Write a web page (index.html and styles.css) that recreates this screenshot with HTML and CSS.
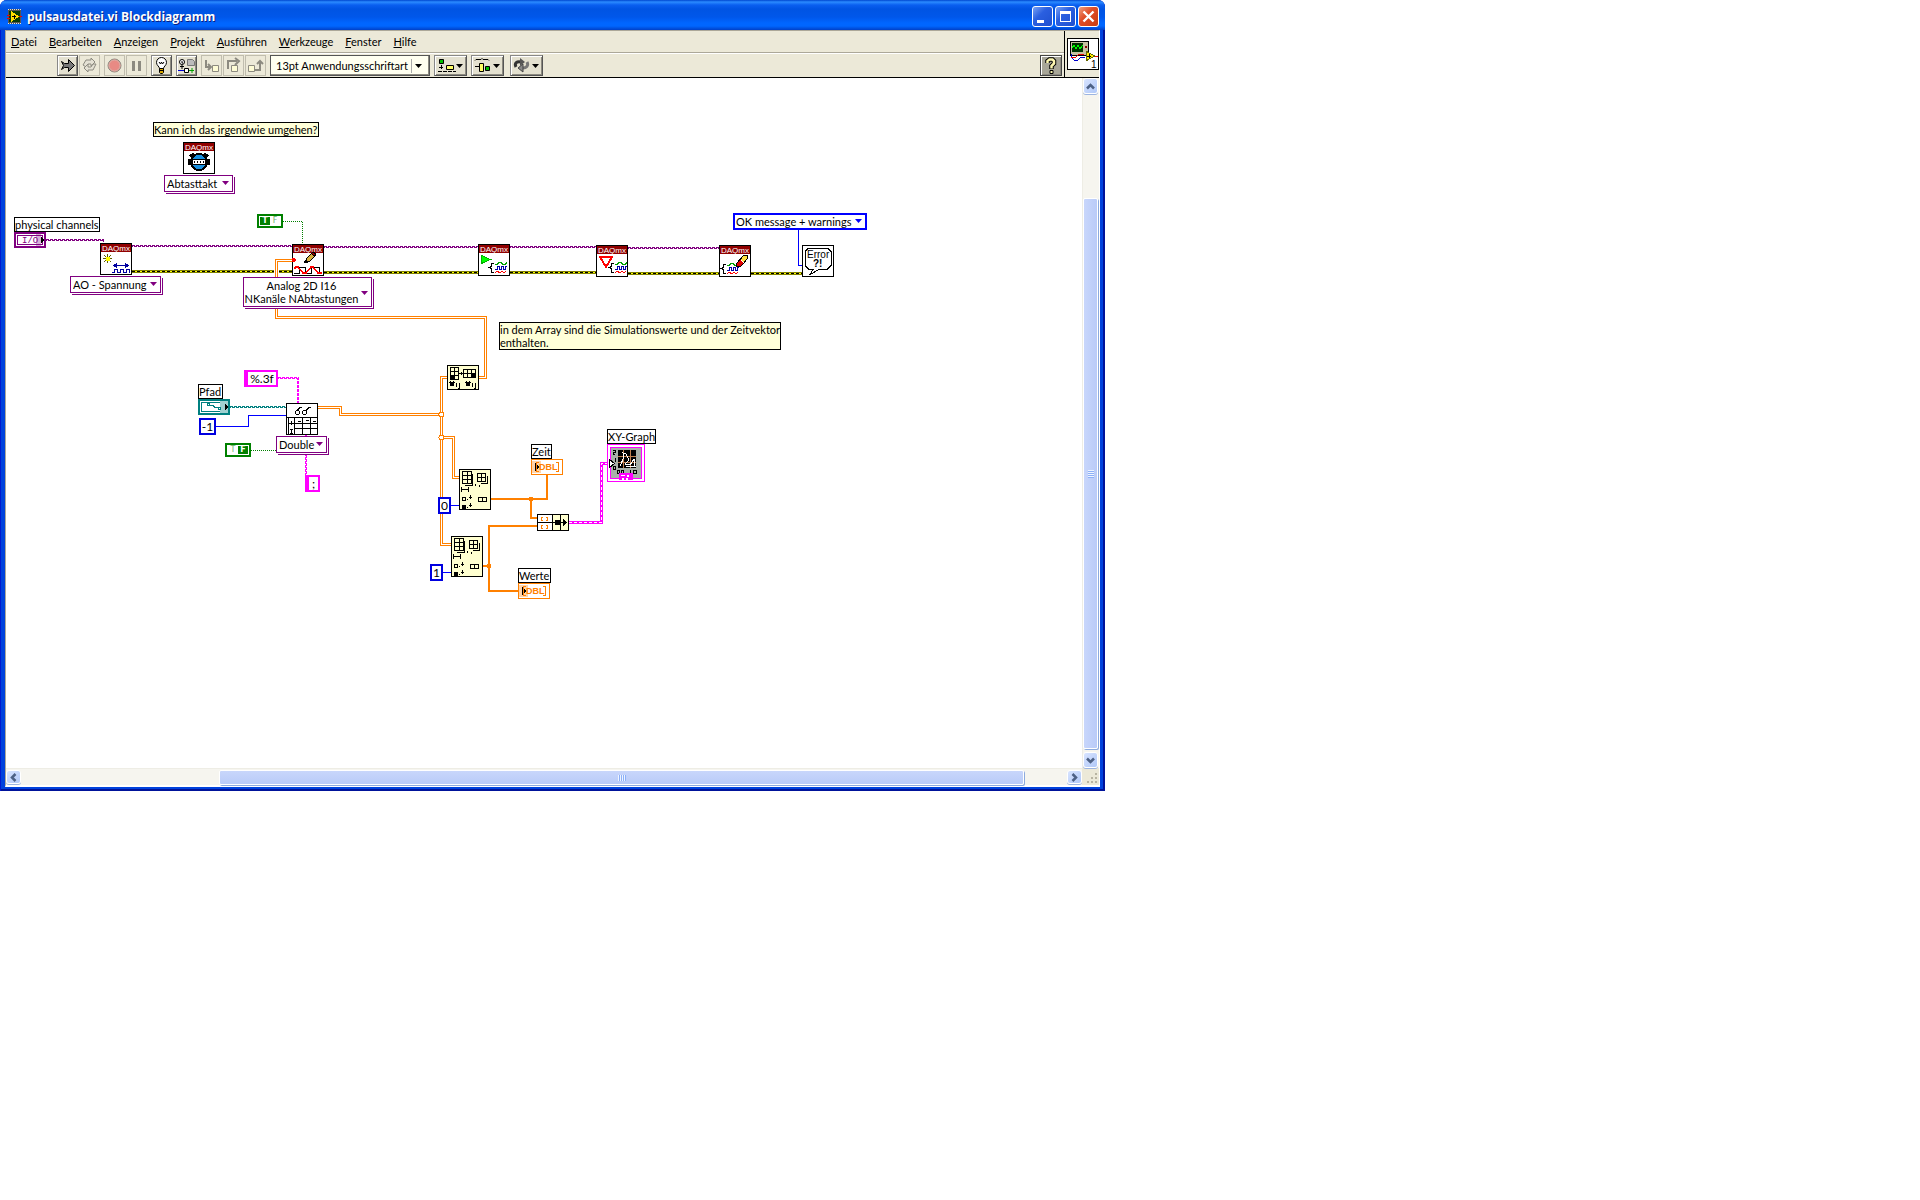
FILE: index.html
```html
<!DOCTYPE html>
<html lang="de">
<head>
  <meta charset="UTF-8" />
  <meta name="viewport" content="width=device-width, initial-scale=1.0"/>
  <title>pulsausdatei.vi Blockdiagramm</title>
  <link rel="stylesheet" href="styles.css">
</head>
<body>
<main class="window">
  <header class="titlebar">
    <svg class="title-icon" width="16" height="16" viewBox="0 0 16 16" shape-rendering="crispEdges">
      <path fill="#555" d="M1 0h13v15H1z"/><path stroke="#ddd" stroke-dasharray="1 1" d="M1 .5h13M1 14.5h13"/>
      <path fill="#063b06" d="M2 2h11v11H2z"/><path stroke="#e00" d="M0 6.500h3M0 9.500h3M11 7.500h4"/>
      <path fill="#fd0" d="M4 2l8 5.500-8 5.500z"/><path stroke="#000" d="M5 7.500h4M7 5.500v4"/>
    </svg>
    <h1>pulsausdatei.vi Blockdiagramm</h1>
    <button class="win-btn" aria-label="Minimieren"><svg width="19" height="19"><path fill="#fff" d="M4 13h7v3H4z"/></svg></button>
    <button class="win-btn" aria-label="Maximieren"><svg width="19" height="19"><path fill="#fff" fill-rule="evenodd" d="M4 4h11v11H4zM5 7v7h9V7z"/></svg></button>
    <button class="win-btn close" aria-label="Schließen"><svg width="19" height="19"><path stroke="#fff" stroke-width="2.400" d="M4.500 4.500l10 10M14.500 4.500l-10 10"/></svg></button>
  </header>

  <div class="frame">
    <div class="head">
      <div class="bars">
        <nav class="menu">
          <a href="#"><u>D</u>atei</a>
          <a href="#"><u>B</u>earbeiten</a>
          <a href="#"><u>A</u>nzeigen</a>
          <a href="#"><u>P</u>rojekt</a>
          <a href="#"><u>A</u>usführen</a>
          <a href="#"><u>W</u>erkzeuge</a>
          <a href="#"><u>F</u>enster</a>
          <a href="#"><u>H</u>ilfe</a>
        </nav>
        <div class="toolbar">
          <div class="group">
            <button class="tool" aria-label="Ausführen"><svg width="19" height="19"><path fill="#777" stroke="#000" d="M3.500 5.500l3 2h4v-4l6 6-6 6v-4h-4l-3 2 2-4z"/></svg></button>
            <button class="tool off" aria-label="Wiederholt ausführen"><svg width="19" height="19" fill="#e4e1d4" stroke="#8c8a80"><path d="M3 9l3-5h5V2l4 4-4 4V8H8L6 11z"/><path d="M16 8l-3 6H8v2l-4-4 4-4v3h3l2-3z"/></svg></button>
          </div>
          <div class="group">
            <button class="tool off" aria-label="Abbrechen"><svg width="19" height="19"><circle cx="9.500" cy="9.500" r="6.500" fill="#e88a84" stroke="#8c8a80"/><circle cx="9.500" cy="9.500" r="5.500" fill="none" stroke="#d8b0a8"/></svg></button>
            <button class="tool off" aria-label="Pause"><svg width="19" height="19"><path fill="#8c8a80" d="M5 5h3v10H5zM11 5h3v10h-3z"/></svg></button>
          </div>
          <button class="tool" aria-label="Highlight-Funktion"><svg width="19" height="19"><path fill="#fff" stroke="#000" d="M7.500 12.500c0-2-3-3-3-6a5 5 0 0 1 10 0c0 3-3 4-3 6z"/><path fill="none" stroke="#000" d="M7 6l1.500 2L9.500 6l1 2L12 6"/><path fill="#dca800" stroke="#000" d="M7.500 12.500h4v4l-1 1h-2l-1-1z"/><path stroke="#000" d="M7 14.500h5"/></svg></button>
          <button class="tool" aria-label="Verbindungswerte speichern"><svg width="19" height="19"><circle cx="5" cy="6" r="2.500" fill="#fff" stroke="#000"/><path fill="none" stroke="#000" d="M5 5v2h1M3 10.500h4M5 9v4"/><path fill="#bbb" stroke="#777" d="M10.500 3.500h5l2 2v4h-7z"/><path stroke="#0000d0" d="M1 14.500h6"/><path stroke="#00a000" d="M11 14.500h6M15 12v5"/><path fill="#fff" stroke="#000" d="M7.500 12.500h4v4h-4z"/></svg></button>
          <div class="group">
            <button class="tool off" aria-label="Hineinspringen"><svg width="19" height="19"><path fill="none" stroke="#8c8a80" stroke-width="2" d="M4 4v7h4M6 8l3 3-3 3"/><path fill="#fdfbd5" stroke="#8c8a80" d="M10.500 9.500h6v6h-6z"/></svg></button>
            <button class="tool off" aria-label="Überspringen"><svg width="19" height="19"><path fill="none" stroke="#8c8a80" stroke-width="2" d="M4 13V5h9M11 2l4 3-4 4"/><path fill="#fdfbd5" stroke="#8c8a80" d="M7.500 9.500h6v6h-6z"/></svg></button>
            <button class="tool off" aria-label="Herausspringen"><svg width="19" height="19"><path fill="none" stroke="#8c8a80" stroke-width="2" d="M9 14h5V5M11 8l3-3 3 3"/><path fill="#fdfbd5" stroke="#8c8a80" d="M2.500 9.500h6v6h-6z"/></svg></button>
          </div>
          <div class="font-box">
            <select class="font-select" aria-label="Schriftart"><option>13pt Anwendungsschriftart</option></select>
          </div>
          <button class="tool wide" aria-label="Objekte ausrichten"><svg width="31" height="19"><path fill="#00c000" stroke="#000" d="M4.500 3.500h4v4h-4z"/><path stroke="#000" d="M6.500 9v5M4 11.500h5M3 15.500h18" stroke-dasharray="4 1"/><path fill="#ff6" stroke="#000" d="M11.500 9.500h7v4h-7z"/><path d="M21 8h7l-3.500 4z"/></svg></button>
          <button class="tool wide" aria-label="Objekte einreihen"><svg width="31" height="19"><path fill="none" stroke="#000" d="M3 4.500l1-1h5l1-1 1 1h5l1 1M3 10.500h4"/><path fill="#ff6" stroke="#000" d="M7.500 7.500h4v8h-4z"/><path fill="#00c000" stroke="#000" d="M13.500 10.500h4v4h-4z"/><path d="M21 8h7l-3.500 4z"/></svg></button>
          <button class="tool wide reorder" aria-label="Neu ordnen"><svg width="31" height="19"><path fill="none" stroke="#333" stroke-width="3" d="M5 11c-2-4 1-6 5-5"/><path fill="#555" d="M9 2l5 4-5 4z"/><path fill="none" stroke="#777" stroke-width="3" d="M16 6c2 4-1 6-4 6"/><path fill="#888" stroke="#444" d="M12 8v8l-5-4z"/><path d="M21 8h7l-3.500 4z"/></svg></button>
          <button class="tool help" aria-label="Kontexthilfe"><svg width="20" height="19"><path fill="none" stroke="#000" stroke-width="4.500" d="M6.500 7V5l2-1.500h3L13 5v2.500L10.500 10v3"/><path fill="none" stroke="#fdf7b0" stroke-width="2.500" d="M6.500 7V5l2-1.500h3L13 5v2.500L10.500 10v2.500"/><path fill="#fdf7b0" stroke="#000" d="M9 14.500h3v3H9z"/></svg></button>
        </div>
      </div>
      <div class="vi-icon">
        <svg width="32" height="32" shape-rendering="crispEdges">
          <path fill="#fff" stroke="#000" stroke-width="2" d="M0 0h32v32H0z"/>
          <path fill="#c8c0a0" stroke="#000" d="M3.500 3.500h18v14h-18z"/><path fill="#030" d="M5 5h11v9H5z"/>
          <path fill="none" stroke="#0f0" d="M5 10l2-3 2 4 2-4 2 4 3-4"/><path fill="#800" d="M18 8h2v2h-2z"/>
          <path fill="none" stroke="#00c" d="M4 16v3l3 3h4l3-3h4"/><path fill="none" stroke="#e00" d="M4 19h5l3-3h5M26 18h5"/>
          <path fill="#fe0" stroke="#660" d="M19.500 13.500l8 4.500-8 4.500z"/><path stroke="#000" d="M20 18.500h4M22 16v4"/>
          <text x="24" y="30" class="tiny">1</text>
        </svg>
      </div>
    </div>

    <div class="work">
      <section class="canvas">
        <svg class="wires" width="100%" height="100%">
          <defs>
            <g id="daqmx">
              <path fill="#fff" d="M0 0h32v32H0z"/><path fill="#900000" d="M0 0h32v9H0z"/>
              <path fill="none" stroke="#000" d="M.5.5h31v31H.5z"/>
              <text x="2" y="8" class="daq">DAQmx</text>
            </g>
            <g id="waves" fill="none">
              <path stroke="#000" d="M5.500 11.500h-2v3l-2 1 2 1v4h2"/>
              <path stroke="#00a000" d="M7 12.500h2l2-2h2l2 2h2l2-2"/>
              <path stroke="#00a" d="M7 17.500h2v-3h2v3h2v-3h2v3h2v-3h2"/>
              <path stroke="#f00" d="M7 21l2-2 3 2 2-2 2 2 2-2"/>
            </g>
            <g id="index">
              <path fill="#ffffd0" stroke="#000" d="M.5.500h31v40H.500z"/>
              <path fill="none" stroke="#000" d="M3.500 2.500h9v12h-9zM3.500 6.500h9M3.500 10.500h9M8 2.500v12M13.500 4.500v12h-8M18.500 4.500h8v8h-8zM22.500 4.500v8M18.500 8.500h8M28.500 7v7h-7M2.500 18v5M9.500 18v5M3 20.500h6M3.500 28.500h3v3h-3zM8 30.500h1M10 28.500h3M11.500 26v4M10 36.500h3M11.500 34v4M8 38.500h1M19.500 28.500h8v4h-8zM23.500 28.500v4M16.500 15v2M20.500 16v2"/>
              <path d="M3 36h4v4H3z"/>
            </g>
            <g id="dbl">
              <path fill="#fff" stroke="#ff8000" d="M.5.500h31v15H.500z"/>
              <path fill="#ffd4aa" d="M1 2h9v12H1z"/><path d="M4 4l4 4-4 4z"/>
              <path fill="none" stroke="#ff8000" d="M8 3.500H5.500v9H8M25 3.500h2.500v9H25"/>
              <text x="8" y="11" class="dbl">DBL</text>
            </g>
            <path id="error-wire" fill="none" d="M132 271.500h142M279 271.500h13M324 272.500h154M510 272.500h86M628 273.500h91M751 273.500h51"/>
            <path id="array-wire" fill="none" d="M292 260.500h-15.500v57h209v60h-6.500M318 407.500h22.500v7h101M447 377.500h-5.500v167h9.500M441.500 437.500h12v40h5.500"/>
          </defs>

          <g transform="translate(-6 -78)" shape-rendering="crispEdges" fill="none">
            <!-- error cluster -->
            <use href="#error-wire" class="err-edge"/>
            <use href="#error-wire" class="err-core"/>
            <use href="#error-wire" class="err-dash"/>
            <!-- task -->
            <g class="task">
              <path d="M46 239.500h57v4M132 245.500h160M324 246.500h154M510 246.500h86M628 247.500h91"/>
              <path class="alt" d="M46 240.500h57M132 246.500h160M324 247.500h154M510 247.500h86M628 248.500h91"/>
            </g>
            <!-- booleans -->
            <path class="bool" d="M283 221.500h19.500v23M251 450.500h25"/>
            <!-- path, string -->
            <path class="path-wire" d="M230 406.500h56"/><path class="path-wire alt" d="M230 407.500h56"/>
            <path class="string" d="M278 377.500h20.500v26M306.500 435v40"/><path class="string alt" d="M278 378.500h19.500v25M305.500 435v40"/>
            <!-- integers -->
            <path stroke="#0000ff" d="M798.500 230v35.500h3.500M216 426.500h32.500v-11H286M451 505.500h8M443 572.500h8"/>
            <!-- 2D arrays -->
            <use href="#array-wire" class="array-edge"/>
            <use href="#array-wire" class="array-core"/>
            <circle cx="441.500" cy="414.500" r="2.500" fill="#fff" stroke="#ff8000"/><circle cx="441.500" cy="437.500" r="2.500" fill="#fff" stroke="#ff8000"/>
            <!-- 1D arrays -->
            <path stroke="#ff8000" stroke-width="2" d="M491 499h56v-24M531 499v19h6M483 566h6v-40h48M489 566v25h29"/>
            <circle cx="531" cy="499" r="2.500" fill="#ff8000"/><circle cx="489" cy="566" r="2.500" fill="#ff8000"/>
            <!-- cluster -->
            <path stroke="#ff00ff" stroke-width="3" d="M569 522.500h32.500v-59h5.500"/><path stroke="#fff" stroke-dasharray="3 2" d="M569 522.500h32.500v-59h5.500"/>
          </g>

          <g transform="translate(-6 -78)" shape-rendering="crispEdges">
            <g transform="translate(183 142)">
              <use href="#daqmx"/>
              <circle cx="16" cy="20" r="8" fill="#1890e0" stroke="#000" stroke-width="2"/>
              <path d="M6 13l4-2 3 2-4 4zM26 13l-4-2-3 2 4 4zM5 17h3v6H5zM24 17h3v6h-3z"/>
              <path fill="#fff" stroke="#000" d="M9.500 17.500h13v5h-13z"/><path stroke="#000" d="M11.500 19v2M14.500 19v2M17.500 19v2M20.500 19v2"/>
            </g>
            <g transform="translate(100 243)">
              <use href="#daqmx"/>
              <path stroke="#606000" d="M7.500 11v9M3 15.500h9M4 12l7 7M11 12l-7 7"/><path fill="#ff0" d="M6 14h4v4H6z"/>
              <path stroke="#0000a0" d="M14 22.500h14"/><path fill="#0000a0" d="M13 22.500l4-3v6zM29 22.500l-4-3v6z"/>
              <path fill="none" stroke="#0000a0" d="M12 29.500h2v-3h3v3h3v-3h3v3h3v-3h3v3h1"/>
            </g>
            <g transform="translate(292 244)">
              <use href="#daqmx"/>
              <path fill="#d8b040" stroke="#000" d="M13.500 18.500l1-4 5-5 3 3-5 5z"/><path fill="#900" stroke="#000" d="M19.500 9.500l1-1h2l1 2-1 2z"/><path d="M12 19l3-1-2-2z"/>
              <path fill="none" stroke="#000" d="M2 29.500h5v-6h6v6h6v-6h8v6h3"/>
              <path fill="none" stroke="#f00" stroke-width="1.500" d="M2 25l2-2h2l5 6h3l5-6h2l5 6h4"/>
              <path fill="#f00" d="M0 14h2l2 2-2 2H0z"/>
            </g>
            <g transform="translate(478 244)">
              <use href="#daqmx"/><path fill="#0f0" stroke="#00b000" d="M3.500 11.500v8l9-4z"/>
              <use href="#waves" x="10" y="8"/>
            </g>
            <g transform="translate(596 245)">
              <use href="#daqmx"/><path fill="#fff" stroke="#f00" stroke-width="2" d="M4 12h12l-6 10z"/>
              <use href="#waves" x="12" y="7"/>
            </g>
            <g transform="translate(719 245)">
              <use href="#daqmx"/><use href="#waves" x="1" y="8"/>
              <path fill="#ffe040" stroke="#000" d="M17.500 18.500l7-8h4v3l-7 8h-4z"/><path fill="#e00000" d="M18 18l3-3 3 3-3 3h-3z"/><path stroke="#fff" d="M22 15l3 3"/>
            </g>
            <g transform="translate(802 245)">
              <path fill="#fff" stroke="#000" d="M.5.500h31v31H.500z"/>
              <path fill="none" stroke="#000" d="M6 3.500h20l3 3v14l-4 4H17l-9 5 3-5H7l-4-4v-14z"/>
              <text x="5" y="13" class="err">Error</text><text x="11" y="22" class="err bold">?!</text>
            </g>
            <g transform="translate(286 403)">
              <path fill="#fff" stroke="#000" d="M.5.500h31v31H.500z"/>
              <path fill="none" stroke="#000" d="M11 7.500l3-3h2M20 7.500l3-3h2M.5 14.500h31M2.500 15v17M8.500 15v17M16.500 15v17M24.500 15v17M3 20.500h28M8 25.500h23M5.500 18v4M4 26.500h3M4 30.500h3M5.500 27v4M12 18.500h3M20 17.500h3M27 18.500h3"/>
              <circle cx="11.500" cy="9.500" r="2" fill="none" stroke="#000"/><circle cx="18.500" cy="9.500" r="2" fill="none" stroke="#000"/>
            </g>
            <g transform="translate(447 365)">
              <path fill="#ffffd0" stroke="#000" d="M.5.500h31v24H.500z"/>
              <path fill="none" stroke="#000" d="M3.500 2.500h8v12h-8zM3.500 6.500h8M3.500 10.500h8M7.500 2.500v12M12 8.500h4M14.500 7v3M16.500 4.500h12v8h-12zM16.500 8.500h12M20.500 4.500v8M24.500 4.500v8M9.500 18v4M12.500 18v5h-2M25.500 18v4M28.500 18v5h-2"/>
              <path stroke="#000" stroke-width="2" d="M3 17l4 4M7 17l-4 4M19 17l4 4M23 17l-4 4"/>
              <path d="M3 11h4v4H3zM25 9h4v4h-4z"/>
            </g>
            <use href="#index" x="459" y="469"/>
            <use href="#index" x="451" y="536"/>
            <g transform="translate(537 514)">
              <path fill="#ffffd0" stroke="#000" d="M.5.500h31v16H.500z"/><path fill="#fff" d="M1 1h14v15H1z"/>
              <path fill="none" stroke="#000" d="M15.500 0v17M23.500 0v17M0 8.500h16M16 8.500h13"/>
              <path d="M18 6h5v5h-5zM26 5l4 3.500-4 3.500z"/><path fill="none" stroke="#ff8000" d="M6 3.500H4.500v3H6M9 3.500h1.500v3H9M6 11.500H4.500v3H6M9 11.500h1.500v3H9"/>
            </g>
            <use href="#dbl" x="531" y="459"/>
            <use href="#dbl" x="518" y="583"/>
            <g transform="translate(14 232)">
              <path fill="#fff" stroke="#800080" stroke-width="2" d="M1 1h30v14H1z"/><path fill="#d8b0d8" d="M22 2h5v12h-5z"/><path fill="none" stroke="#800080" d="M3.500 3.500h25v9h-25z"/>
              <text x="8" y="11" class="io">I/O</text><path d="M27 5l3 3-3 3z"/>
            </g>
            <g transform="translate(198 399)">
              <path fill="#fff" stroke="#008080" stroke-width="2" d="M1 1h30v14H1z"/><path fill="none" stroke="#008080" d="M3.500 3.500h25v9h-25z"/>
              <path fill="#a0d0d0" d="M22 2h8v12h-8z"/><path fill="none" stroke="#008080" d="M9.500 4.500h2v2h-2zM12 6.500h3l2 2h3M20.500 8.500h2v2h-2z"/><path d="M27 5l3 3-3 3z"/>
            </g>
            <g transform="translate(607 444)">
              <path fill="#fff" stroke="#ff00ff" d="M.5.500h37v37H.500z"/><path fill="#a8b0a8" stroke="#ff00ff" d="M3.500 3.500h31v31h-31z"/>
              <path d="M11 6h18v18H11z"/><path fill="none" stroke="#c08050" d="M16.500 6v18M23.500 6v18M11 12.500h18M11 18.500h18"/>
              <path fill="none" stroke="#fff" d="M13 22l4-9-1-4 3 1 3 6-4 4 5 1 4-6 1 7h-9"/>
              <path fill="none" stroke="#000" d="M6 6.500h2v2H6v2h2M8.500 14v4M6.500 22.500h2v3h-2zM10.500 26.500h2v3h-2zM14.500 26.500h2v3h-2zM23.500 26v4M26.500 26.500h3v3h-3z"/>
              <path fill="#fff" stroke="#000" d="M2.500 15.500l5 4-5 4z"/><path fill="#ff00ff" d="M12 29h14v7H12z"/><path fill="#fff" d="M14 31h4v1h-4zM20 31h2v2h-2zM15 34h2v2h-2zM19 34h2v2h-2z"/>
            </g>
          </g>
        </svg>

        <p class="note n-question">Kann ich das irgendwie umgehen?</p>
        <p class="note n-array">in dem Array sind die Simulationswerte und der Zeitvektor<br>enthalten.</p>

        <span class="label l-channels">physical channels</span>
        <span class="label l-pfad">Pfad</span>
        <span class="label l-zeit">Zeit</span>
        <span class="label l-werte">Werte</span>
        <span class="label l-graph">XY-Graph</span>

        <div class="poly p-takt"><select aria-label="DAQmx Timing"><option>Abtasttakt</option></select></div>
        <div class="poly p-kanal"><select aria-label="DAQmx Kanal"><option>AO - Spannung</option></select></div>
        <div class="poly p-double"><select aria-label="Datentyp"><option>Double</option></select></div>
        <button class="poly p-write" aria-haspopup="listbox">Analog 2D I16<br>NKanäle NAbtastungen</button>
        <div class="ring"><select aria-label="Fehlerdialog"><option>OK message + warnings</option></select></div>

        <button class="bool-const b-true" aria-label="TRUE"><b>T</b><i>F</i></button>
        <button class="bool-const b-false" aria-label="FALSE"><i>T</i><b>F</b></button>

        <input class="const str c-format" aria-label="Format" value="%.3f">
        <input class="const str c-sep" aria-label="Trennzeichen" value=";">
        <input class="const c-rows" aria-label="Anzahl Zeilen" value="-1">
        <input class="const c-zero" aria-label="Index Zeit" value="0">
        <input class="const c-one" aria-label="Index Werte" value="1">
      </section>

      <div class="scroll vertical">
        <button aria-label="Nach oben"><svg width="9" height="9"><path d="M1 6.500l3.500-3.500L8 6.500"/></svg></button>
        <div class="thumb"></div>
        <button aria-label="Nach unten"><svg width="9" height="9"><path d="M1 2.500L4.500 6 8 2.500"/></svg></button>
      </div>
      <div class="scroll horizontal">
        <button aria-label="Nach links"><svg width="9" height="9"><path d="M6.500 1L3 4.500 6.500 8"/></svg></button>
        <div class="thumb"></div>
        <button aria-label="Nach rechts"><svg width="9" height="9"><path d="M2.500 1L6 4.500 2.500 8"/></svg></button>
      </div>
      <div class="grip"><svg width="12" height="12"><path fill="#b8b4a2" d="M9 1h2v2H9zM5 5h2v2H5zM9 5h2v2H9zM1 9h2v2H1zM5 9h2v2H5zM9 9h2v2H9z"/></svg></div>
    </div>
  </div>
</main>
</body>
</html>
```
FILE: styles.css
```css
* {
  box-sizing: border-box;
}
body {
  margin: 0;
  background: #fff;
  color: #000;
  font: 11px/13px "Lato", sans-serif;
  display: grid;
  grid-template-columns: 221fr 163fr;
}
button, input, select {
  font: inherit;
  color: inherit;
  margin: 0;
  padding: 0;
  border: none;
  border-radius: 0;
  background: none;
}
select {
  appearance: none;
  outline: none;
}
svg {
  display: block;
}

/* window frame */
.window {
  background: #0042dd;
  border-radius: 7px 7px 0 0;
  box-shadow: inset 1px 0 #0019cf, inset -2px -2px #00139a;
  overflow: hidden;
}
.titlebar {
  display: flex;
  align-items: center;
  gap: 2px;
  height: 30px;
  padding: 3px 6px 0 7px;
  background: linear-gradient(#0046d0 0, #2b8bff 2px, #0a5ff0 5px, #0054e3 9px, #0057ea 17px, #0066ff 23px, #0066ff 26px, #0040c8 30px);
}
.titlebar h1 {
  flex: 1;
  margin: 0 0 0 2px;
  color: #fff;
  font: bold 12px/18px "Open Sans", sans-serif;
  text-shadow: 1px 1px #0a1f80;
}
.win-btn {
  width: 21px;
  height: 21px;
  border: 1px solid #fff;
  border-radius: 3px;
  background: linear-gradient(135deg, #7aa2f4, #2a5fe0 40%, #1f50d0);
}
.win-btn.close {
  background: linear-gradient(135deg, #f0a080, #e04e28 40%, #c83c10);
}
.frame {
  margin: 0 5px 4px;
  border: 1px solid #fff;
  border-top-color: #aca899;
  border-left-color: #aca899;
  border-bottom-width: 2px;
  background: #ece9d8;
}

/* menu and toolbar */
.head {
  display: flex;
  border-bottom: 1px solid #000;
}
.bars {
  flex: 1;
}
.menu {
  display: flex;
  gap: 12px;
  height: 22px;
  padding: 4px 5px;
  border-bottom: 1px solid #aca899;
}
.menu a {
  color: #000;
  text-decoration: none;
}
.toolbar {
  display: flex;
  height: 24px;
  padding: 1px 2px 0 51px;
  border-top: 1px solid #fff;
  gap: 4px;
}
.group {
  display: flex;
  gap: 1px;
}
.tool {
  width: 21px;
  height: 21px;
  border: 1px solid #555;
  border-top-color: #888;
  border-left-color: #888;
  background: #e4e1d0;
  box-shadow: inset 1px 1px #fff, inset -1px -1px #8c8a80;
}
.tool.off {
  border-color: #c0bdae;
  background: #ece9d8;
  box-shadow: none;
}
.tool.wide {
  width: 33px;
}
.tool.reorder {
  margin-left: 2px;
}
.tool.help {
  width: 22px;
  margin-left: auto;
  background: #a8a698;
  border: 1px solid #444;
}
.font-box {
  position: relative;
  width: 160px;
  height: 21px;
  border: 1px solid #555;
  background: #fffff0;
  box-shadow: inset -1px -1px #8c8a80;
}
.font-select {
  width: 100%;
  height: 18px;
  padding-left: 5px;
}
.font-box::after {
  content: "";
  position: absolute;
  right: 7px;
  top: 8px;
  width: 7px;
  height: 4px;
  background: #000;
  clip-path: polygon(0 0, 100% 0, 50% 100%);
}
.font-box::before {
  content: "";
  position: absolute;
  right: 17px;
  top: 3px;
  height: 14px;
  border-left: 1px solid #aaa;
}
.vi-icon {
  width: 35px;
  padding: 7px 0 0 2px;
  border-left: 1px solid #000;
}
.tiny {
  font: 10px "Liberation Sans", sans-serif;
}

/* diagram */
.work {
  display: grid;
  grid-template-columns: 1fr 17px;
}
.canvas {
  position: relative;
  min-height: 690px;
  background: #fff;
  overflow: hidden;
}
.wires {
  position: absolute;
  inset: 0;
}
.err-edge {
  stroke: #808000;
  stroke-width: 3;
}
.err-core {
  stroke: #ff0;
}
.err-dash {
  stroke: #000;
  stroke-dasharray: 3 2;
}
.task path {
  stroke: #800080;
  stroke-dasharray: 3 1;
}
.task .alt, .path-wire.alt, .string.alt {
  stroke-dashoffset: 2;
}
.bool {
  stroke: #008000;
  stroke-dasharray: 1 1;
}
.path-wire {
  stroke: #008080;
  stroke-dasharray: 3 1;
}
.string {
  stroke: #ff00ff;
  stroke-dasharray: 3 1;
}
.array-edge {
  stroke: #ff8000;
  stroke-width: 3;
}
.array-core {
  stroke: #fff;
}
.daq {
  font: 8px "Liberation Sans", sans-serif;
  fill: #fff;
}
.dbl {
  font: bold 9px "Liberation Sans", sans-serif;
  fill: #ff8000;
}
.io {
  font: 9px "Liberation Mono", monospace;
  fill: #800080;
}
.err {
  font: 10px "Liberation Sans", sans-serif;
}
.err.bold {
  font-weight: bold;
}

.note, .label, .poly, .ring, .const, .bool-const {
  position: absolute;
  margin: 0;
}
.note, .label {
  border: 1px solid #000;
  background: #fff;
  white-space: nowrap;
}
.note {
  background: #ffffd8;
}
.n-question { left: 147px; top: 44px; min-width: 166px; }
.n-array { left: 493px; top: 244px; min-width: 281px; }
.l-channels { left: 8px; top: 139px; min-width: 86px; }
.l-pfad { left: 192px; top: 306px; min-width: 25px; }
.l-zeit { left: 525px; top: 366px; min-width: 21px; }
.l-werte { left: 512px; top: 490px; min-width: 33px; }
.l-graph { left: 601px; top: 351px; min-width: 48px; }

.poly {
  height: 17px;
  border: 1px solid #800080;
  background: #fff;
  box-shadow: 1px 1px #fff, 2px 2px #800080;
}
.poly select, .ring select {
  width: 100%;
  height: 15px;
  padding-left: 2px;
}
.poly::after, .ring::after {
  content: "";
  position: absolute;
  right: 3px;
  top: 5px;
  width: 7px;
  height: 4px;
  background: #800080;
  clip-path: polygon(0 0, 100% 0, 50% 100%);
}
.p-takt { left: 158px; top: 97px; width: 69px; }
.p-kanal { left: 64px; top: 198px; width: 91px; }
.p-double { left: 270px; top: 358px; width: 51px; }
.p-write { left: 237px; top: 199px; width: 129px; height: 30px; padding-right: 12px; white-space: nowrap; }
.p-write::after { top: 13px; }
.ring {
  left: 727px;
  top: 135px;
  width: 134px;
  height: 17px;
  border: 2px solid #0000ff;
  background: #fff;
}
.ring select {
  height: 13px;
  padding-left: 1px;
}
.ring::after {
  background: #0000ff;
  top: 4px;
}

.const {
  height: 17px;
  border: 2px solid #0000e0;
  background: #fff;
  font-size: 12px;
  text-align: center;
}
.const.str {
  border-color: #ff00ff;
  border-left-width: 4px;
}
.c-format { left: 238px; top: 292px; width: 34px; }
.c-sep { left: 299px; top: 397px; width: 15px; }
.c-rows { left: 193px; top: 340px; width: 17px; }
.c-zero { left: 432px; top: 419px; width: 13px; }
.c-one { left: 424px; top: 486px; width: 13px; }

.bool-const {
  display: flex;
  width: 26px;
  height: 14px;
  border: 2px solid #008000;
  background: #fff;
  padding: 1px;
  font: 8px/8px "DejaVu Sans", sans-serif;
  color: #008000;
}
.bool-const b, .bool-const i {
  flex: 1;
  font-style: normal;
}
.bool-const b {
  background: #008000;
  color: #fff;
}
.bool-const i {
  opacity: 0.6;
}
.b-true { left: 251px; top: 136px; }
.b-false { left: 219px; top: 365px; }

/* scrollbars */
.scroll {
  display: grid;
  background: #f6f5ef;
}
.scroll button {
  display: grid;
  place-items: center;
  width: 15px;
  height: 16px;
  border: 1px solid #fff;
  border-radius: 3px;
  background: linear-gradient(135deg, #d8e4ff, #b0c8f8);
  box-shadow: 0 1px #9cb4e0;
}
.scroll path {
  fill: none;
  stroke: #4d6185;
  stroke-width: 2.5;
}
.thumb {
  border: 1px solid #fff;
  border-radius: 2px;
  box-shadow: 1px 1px #8caade;
}
.vertical {
  grid-template-rows: 17px 103fr 550fr 3fr 16px;
  padding-right: 1px;
  border-left: 1px solid #eeede5;
}
.vertical .thumb {
  grid-row: 3;
  background: repeating-linear-gradient(#eef4ff 0 1px, #8cb0f8 1px 2px) center / 6px 8px no-repeat, linear-gradient(90deg, #c8d6fb, #b9cbf8);
}
.vertical button:last-child {
  grid-row: 5;
}
.horizontal {
  grid-template-columns: 15px 198fr 804fr 43fr 15px;
  padding-top: 1px;
  border-top: 1px solid #eeede5;
  height: 17px;
}
.horizontal button {
  height: 14px;
}
.horizontal .thumb {
  grid-column: 3;
  background: repeating-linear-gradient(90deg, #eef4ff 0 1px, #8cb0f8 1px 2px) center / 8px 6px no-repeat, linear-gradient(#c8d6fb, #b9cbf8);
}
.horizontal button:last-child {
  grid-column: 5;
}
.grip {
  display: grid;
  place-items: end;
  padding: 1px;
}
```
